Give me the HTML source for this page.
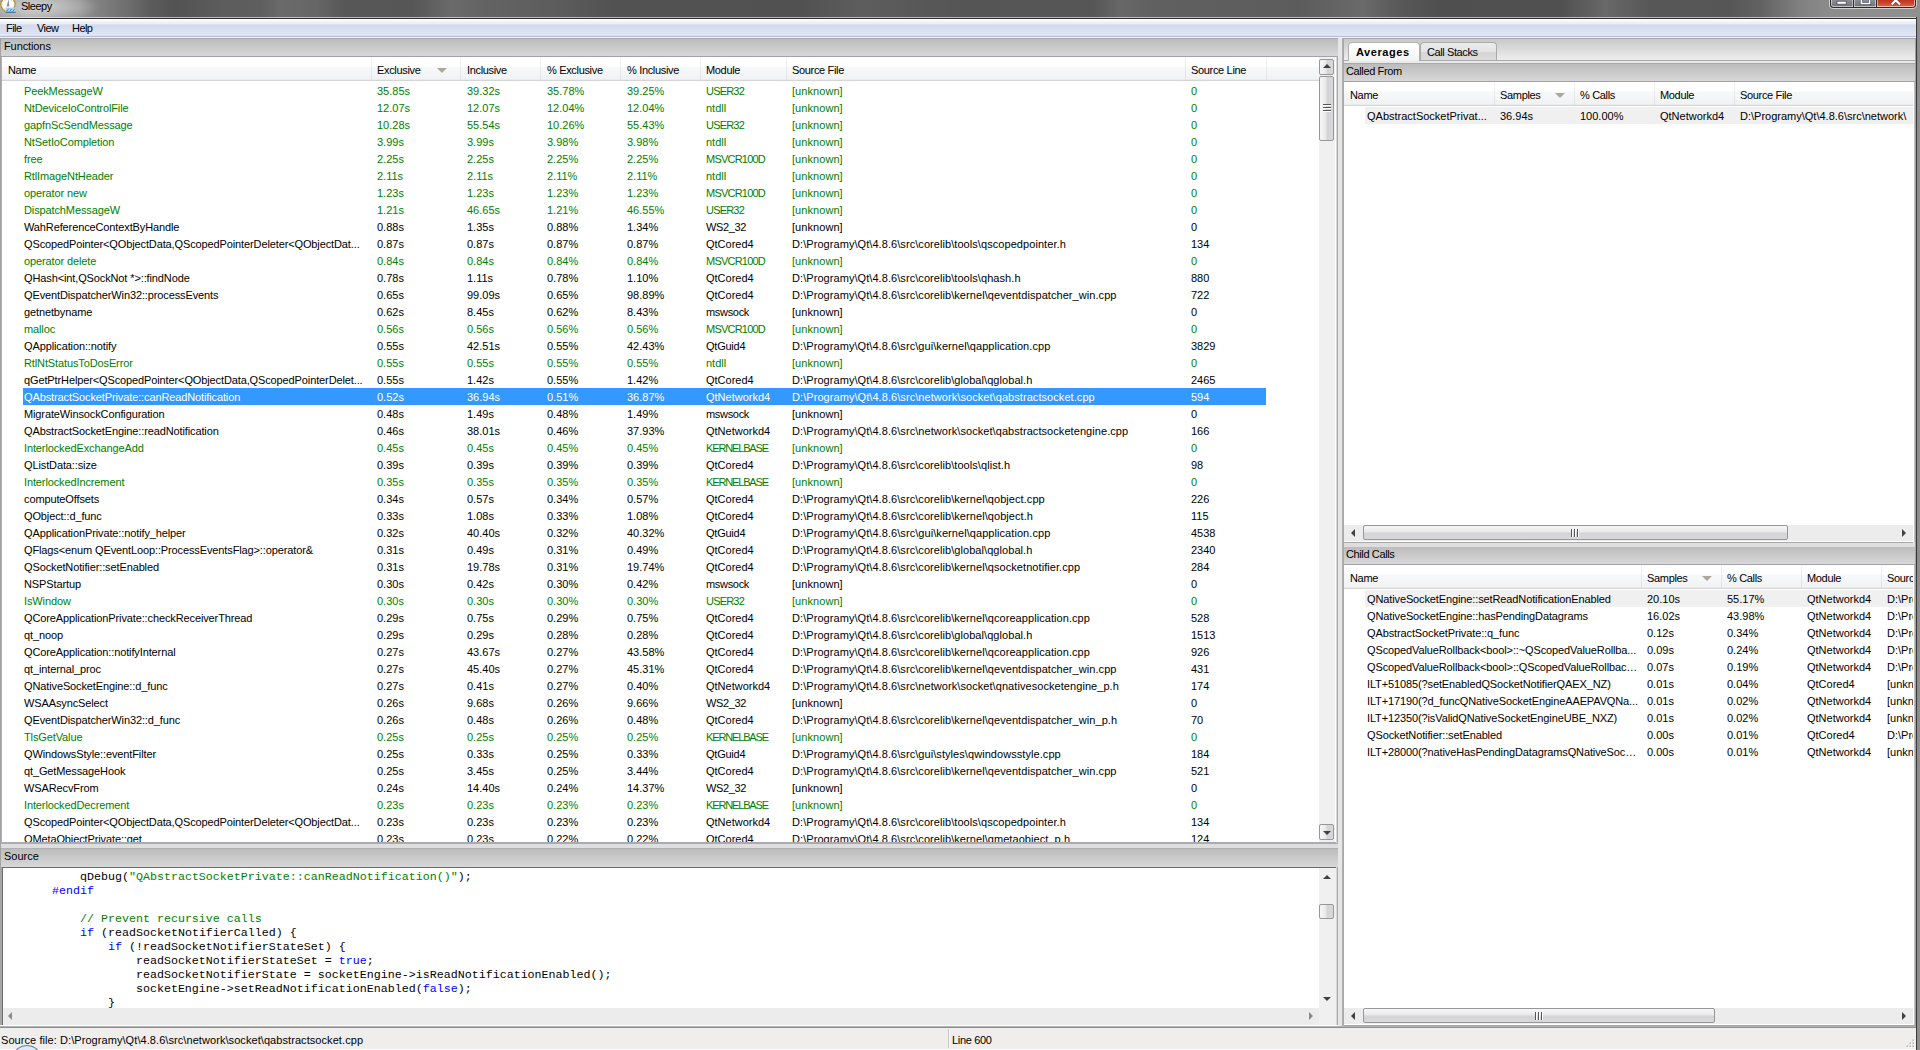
<!DOCTYPE html>
<html><head><meta charset="utf-8"><title>Sleepy</title>
<style>
html,body{margin:0;padding:0}
body{width:1920px;height:1050px;position:relative;overflow:hidden;background:#f0f0f0;font:11px/17px "Liberation Sans",sans-serif;color:#000}
div,i,b,span,svg{position:absolute;display:block;font-style:normal;font-weight:normal;white-space:pre}
/* ---------- window frame / title */
#title{left:0;top:0;width:1920px;height:18px;background:linear-gradient(90deg,#9a9a9a 0px,#a4a4a4 30px,#939393 80px,#808080 100px,#6c6c6c 130px,#5c5c5c 150px,#525252 175px,#5c5c5c 220px,#5e5e5e 260px,#6a6a6a 280px,#666 317px,#575757 345px,#565656 413px,#6a6a6a 451px,#646464 480px,#5c5c5c 557px,#525252 614px,#515151 800px,#5d5d5d 860px,#555 960px,#565656 1094px,#686868 1120px,#606060 1152px,#5c5c5c 1300px,#6a6a6a 1363px,#585858 1400px,#4f4f4f 1440px,#505050 1560px,#686868 1605px,#575757 1650px,#565656 1730px,#626262 1760px,#808080 1800px,#8c8c8c 1830px,#909090 1920px)}
#tglow{left:-25px;top:-9px;width:125px;height:32px;background:radial-gradient(ellipse at center,rgba(255,255,255,.5) 0,rgba(255,255,255,.25) 40%,rgba(255,255,255,0) 70%)}
#tglowc{left:0;top:0;width:140px;height:17px;overflow:hidden}
#ttext{left:21px;top:0;font-size:11px;line-height:13px;color:#000;letter-spacing:-.5px}
#tline{left:0;top:17px;width:1917px;height:2px;background:linear-gradient(180deg,rgba(255,255,255,.58) 0,rgba(255,255,255,.58) 50%,#303030 50%,#303030 100%)}
#rframe{left:1916px;top:17px;width:4px;height:1033px;background:linear-gradient(90deg,#3a3a3a 0,#3a3a3a 25%,#8a8a8a 25%,#909090 100%)}
/* ---------- menu */
#menu{left:0;top:19px;width:1916px;height:18px;background:linear-gradient(180deg,#fff 0,#fff 1px,#fafbfd 1px,#fafbfd 2px,#f2f4fb 2px,#e9edf7 5px,#dde2f1 5px,#dde2f1 6px,#d3d9ec 6px,#e1e6f5 17px,#b5bdd6 17px,#b5bdd6 18px)}
#menu b{top:1px;line-height:16px;letter-spacing:-.55px}
#menu2{left:0;top:37px;width:1916px;height:1px;background:#f2f2f0}
/* ---------- pane headers */
.ph{height:19px;background:linear-gradient(180deg,#a8a8a8 0,#a8a8a8 1px,#bcbcbc 1px,#d8d8d8 18px,#a2a2a9 18px,#a2a2a9 19px);line-height:17px;text-indent:3px}
/* ---------- list views */
.lv{background:#fff;overflow:hidden}
.hd{left:0;top:0;height:24px;background:linear-gradient(180deg,#fff 0,#fff 9px,#f7f8fa 10px,#f1f2f4 22px,#e3e4e6 23px,#d5d5d5 23px,#d5d5d5 24px)}
.hd b{top:5px;line-height:17px;letter-spacing:-.33px}
.hd i{top:0;width:1px;height:23px;background:linear-gradient(180deg,#f2f2f2 0,#dfe0e2 100%)}
.hd u{position:absolute;display:block;top:11px;width:0;height:0;border-left:5px solid transparent;border-right:5px solid transparent;border-top:5px solid #aca899}
.r{left:0;width:100%;height:17px}
.r b{top:1px;line-height:17px}
.g b{color:#008000}
.s b{color:#fff}
.sel{left:21px;top:0;width:1243px;height:17px;background:#3399ff}
.hot{left:21px;top:0;width:700px;height:17px;background:#f0f0f0}
#flist{left:2px;top:57px;width:1317px;height:785px;overflow:hidden}
.c0{left:22px;width:345px;overflow:hidden;text-overflow:ellipsis;letter-spacing:-.12px}.c1{left:375px}.c2{left:465px}.c3{left:545px}.c4{left:625px}.c5{left:704px}.c6{left:790px;letter-spacing:.065px}.c7{left:1189px}
#clist{left:1344px;top:565px;width:569px;height:443px;overflow:hidden}
.d0{left:23px;width:272px;overflow:hidden;text-overflow:ellipsis;letter-spacing:-.12px}.d1{left:303px}.d2{left:383px}.d3{left:463px}.d4{left:543px}
/* ---------- scrollbars */
.sb{background:#f0f0f0}
.btn{border:1px solid #979797;border-radius:2px;background:linear-gradient(90deg,#f6f6f6 0,#e9e9eb 45%,#d4d4d7 55%,#d9d9dc 100%);box-sizing:border-box}
.btnh{border:1px solid #979797;border-radius:2px;background:linear-gradient(180deg,#f6f6f6 0,#e9e9eb 45%,#d4d4d7 55%,#d9d9dc 100%);box-sizing:border-box}
.au{width:0;height:0;border-left:4px solid transparent;border-right:4px solid transparent;border-bottom:4px solid #404040}
.ad{width:0;height:0;border-left:4px solid transparent;border-right:4px solid transparent;border-top:4px solid #404040}
.al{width:0;height:0;border-top:4px solid transparent;border-bottom:4px solid transparent;border-right:4px solid #404040}
.ar{width:0;height:0;border-top:4px solid transparent;border-bottom:4px solid transparent;border-left:4px solid #404040}
/* ---------- source */
#src{left:3px;top:868px;width:1316px;height:140px;background:#fff;overflow:hidden;font:11.67px/14px "Liberation Mono",monospace}
#src b{left:-7px;height:14px;line-height:14px;font-weight:bold}
#src .k{color:#0000ff;position:static;display:inline}
#src .q{color:#008000;position:static;display:inline}
#src span{position:static;display:inline}

.k1{letter-spacing:-1.14px}.k2{letter-spacing:-.78px}.k3{letter-spacing:-.8px}.k4{letter-spacing:-.37px}.k5{letter-spacing:-.24px}.k6{letter-spacing:-.31px}

</style></head>
<body>
<div id="title"></div><div id="tglowc"><div id="tglow"></div></div>
<svg id="ticon" style="left:0;top:0" width="18" height="14" viewBox="0 0 18 14"><circle cx="8" cy="4.3" r="7.2" fill="#fdfdfb" stroke="#b59b2c" stroke-width="1.4"/><g fill="#c4c4c4"><rect x="2.2" y="1" width="1" height="1"/><rect x="13" y="1" width="1" height="1"/><rect x="1.5" y="4" width="1" height="1"/><rect x="13.6" y="4" width="1" height="1"/><rect x="2.3" y="6.6" width="1" height="1"/><rect x="12.8" y="6.4" width="1" height="1"/><rect x="3.6" y="8.4" width="1" height="1"/><rect x="4.6" y="-.4" width="1" height="1"/><rect x="10.8" y="-.4" width="1" height="1"/></g><path d="M8.6 -1L9.4 6.6L6.6 6.6Z" fill="#909090"/><rect x="5.5" y="7.6" width="10.2" height="4.4" fill="#a9d1f3"/><rect x="5.5" y="11.7" width="10.2" height="1.1" fill="#3b6690"/><path d="M6.6 11.4l2.2-2.8M9.8 11.4l2-2.6M12.8 11.4l2-2.6" stroke="#4f86be" stroke-width="1"/></svg>
<div id="ttext">Sleepy</div>
<div id="tline"></div>
<svg style="left:1829px;top:0" width="89" height="10" viewBox="0 0 89 10"><defs><linearGradient id="cg" x1="0" y1="0" x2="0" y2="1"><stop offset="0" stop-color="#8d8d93"/><stop offset="1" stop-color="#6c6c74"/></linearGradient><linearGradient id="cr" x1="0" y1="0" x2="0" y2="1"><stop offset="0" stop-color="#bf3520"/><stop offset=".5" stop-color="#cf4a30"/><stop offset="1" stop-color="#e37a58"/></linearGradient></defs>
<path d="M1 0V5Q1 8 4 8H47.5V0Z" fill="url(#cg)"/><path d="M47.5 0V8H84Q87 8 87 5V0Z" fill="url(#cr)"/>
<path d="M.5 0V5Q.5 8.5 4 8.5H84Q87.5 8.5 87.5 5V0" fill="none" stroke="#dadada" stroke-width="1" opacity=".85"/><path d="M1.5 0V5Q1.5 7.5 4.5 7.5H83.5Q86.5 7.5 86.5 5V0" fill="none" stroke="#2a2a2a" stroke-width="1"/><path d="M2.5 0V4.7Q2.5 6.5 4.8 6.5H83.2Q85.5 6.5 85.5 4.7V0" fill="none" stroke="#fff" stroke-width="1" opacity=".55"/>
<path d="M24.5 0V7M47.5 0V7" stroke="#2e2e2e" stroke-width="1"/><path d="M25.5 0V6.5M23.5 0V6.5M46.5 0V6.5M48.5 0V6.5" stroke="#fff" stroke-width="1" opacity=".45"/>
<rect x="8" y="1.2" width="9.2" height="3" fill="#fff" stroke="#4b4b5c" stroke-width=".8"/><path d="M32.4 0V3.5H40.6V0" fill="none" stroke="#4b4b5c" stroke-width="3"/><path d="M32.4 0V3.5H40.6V0" fill="none" stroke="#fff" stroke-width="1.6"/><path d="M62.6 4.6L66.8 .2L71 4.6" stroke="#6a3a34" stroke-width="3.6" fill="none"/><path d="M62.6 4.6L66.8 .2L71 4.6" stroke="#fff" stroke-width="2.2" fill="none"/></svg>
<div id="rframe"></div>
<div id="menu"><b style="left:6px">File</b><b style="left:37px">View</b><b style="left:72px">Help</b></div><div id="menu2"></div>
<!-- left pane -->
<div style="left:0;top:38px;width:2px;height:989px;background:linear-gradient(90deg,#a2a2a2 0,#a2a2a2 50%,#b0b0b0 50%)"></div>
<div class="ph" style="left:1px;top:38px;width:1337px;letter-spacing:-.1px">Functions</div>
<div class="lv" style="left:2px;top:57px;width:1334px;height:785px">
<div class="hd" style="width:1317px"><b style="left:6px">Name</b><i style="left:369px"></i><b style="left:375px">Exclusive</b><u style="left:435px"></u><i style="left:458px"></i><b style="left:465px">Inclusive</b><i style="left:538px"></i><b style="left:545px">% Exclusive</b><i style="left:618px"></i><b style="left:625px">% Inclusive</b><i style="left:698px"></i><b style="left:704px">Module</b><i style="left:784px"></i><b style="left:790px">Source File</b><i style="left:1183px"></i><b style="left:1189px">Source Line</b><i style="left:1264px"></i></div>
<div class="sb" style="left:1317px;top:0;width:16px;height:785px"></div>
<div class="btn" style="left:1317px;top:2px;width:15px;height:16px"><i class="au" style="left:2.5px;top:4px"></i></div>
<div class="btn" style="left:1317px;top:19px;width:15px;height:65px"><i style="left:3px;top:27px;width:8px;height:1px;background:#555;box-shadow:0 3px 0 #555,0 6px 0 #555,0 1px 0 #fff,0 4px 0 #fff,0 7px 0 #fff"></i></div>
<div class="btn" style="left:1317px;top:767px;width:15px;height:16px"><i class="ad" style="left:2.5px;top:6px"></i></div>
</div>
<div style="left:2px;top:842px;width:1336px;height:2px;background:#aaaab0"></div>
<div style="left:1336px;top:57px;width:2px;height:786px;background:linear-gradient(90deg,#d9d9d9 0,#d9d9d9 50%,#a8a8a8 50%)"></div>
<div id="flist">
<div class="r g" style="top:25px"><b class="c0">PeekMessageW</b><b class="c1">35.85s</b><b class="c2">39.32s</b><b class="c3">35.78%</b><b class="c4">39.25%</b><b class="c5 k3">USER32</b><b class="c6">[unknown]</b><b class="c7">0</b></div>
<div class="r g" style="top:42px"><b class="c0">NtDeviceIoControlFile</b><b class="c1">12.07s</b><b class="c2">12.07s</b><b class="c3">12.04%</b><b class="c4">12.04%</b><b class="c5">ntdll</b><b class="c6">[unknown]</b><b class="c7">0</b></div>
<div class="r g" style="top:59px"><b class="c0">gapfnScSendMessage</b><b class="c1">10.28s</b><b class="c2">55.54s</b><b class="c3">10.26%</b><b class="c4">55.43%</b><b class="c5 k3">USER32</b><b class="c6">[unknown]</b><b class="c7">0</b></div>
<div class="r g" style="top:76px"><b class="c0">NtSetIoCompletion</b><b class="c1">3.99s</b><b class="c2">3.99s</b><b class="c3">3.98%</b><b class="c4">3.98%</b><b class="c5">ntdll</b><b class="c6">[unknown]</b><b class="c7">0</b></div>
<div class="r g" style="top:93px"><b class="c0">free</b><b class="c1">2.25s</b><b class="c2">2.25s</b><b class="c3">2.25%</b><b class="c4">2.25%</b><b class="c5 k2">MSVCR100D</b><b class="c6">[unknown]</b><b class="c7">0</b></div>
<div class="r g" style="top:110px"><b class="c0">RtlImageNtHeader</b><b class="c1">2.11s</b><b class="c2">2.11s</b><b class="c3">2.11%</b><b class="c4">2.11%</b><b class="c5">ntdll</b><b class="c6">[unknown]</b><b class="c7">0</b></div>
<div class="r g" style="top:127px"><b class="c0">operator new</b><b class="c1">1.23s</b><b class="c2">1.23s</b><b class="c3">1.23%</b><b class="c4">1.23%</b><b class="c5 k2">MSVCR100D</b><b class="c6">[unknown]</b><b class="c7">0</b></div>
<div class="r g" style="top:144px"><b class="c0">DispatchMessageW</b><b class="c1">1.21s</b><b class="c2">46.65s</b><b class="c3">1.21%</b><b class="c4">46.55%</b><b class="c5 k3">USER32</b><b class="c6">[unknown]</b><b class="c7">0</b></div>
<div class="r " style="top:161px"><b class="c0">WahReferenceContextByHandle</b><b class="c1">0.88s</b><b class="c2">1.35s</b><b class="c3">0.88%</b><b class="c4">1.34%</b><b class="c5 k4">WS2_32</b><b class="c6">[unknown]</b><b class="c7">0</b></div>
<div class="r " style="top:178px"><b class="c0">QScopedPointer&lt;QObjectData,QScopedPointerDeleter&lt;QObjectDat...</b><b class="c1">0.87s</b><b class="c2">0.87s</b><b class="c3">0.87%</b><b class="c4">0.87%</b><b class="c5">QtCored4</b><b class="c6">D:\Programy\Qt\4.8.6\src\corelib\tools\qscopedpointer.h</b><b class="c7">134</b></div>
<div class="r g" style="top:195px"><b class="c0">operator delete</b><b class="c1">0.84s</b><b class="c2">0.84s</b><b class="c3">0.84%</b><b class="c4">0.84%</b><b class="c5 k2">MSVCR100D</b><b class="c6">[unknown]</b><b class="c7">0</b></div>
<div class="r " style="top:212px"><b class="c0">QHash&lt;int,QSockNot *&gt;::findNode</b><b class="c1">0.78s</b><b class="c2">1.11s</b><b class="c3">0.78%</b><b class="c4">1.10%</b><b class="c5">QtCored4</b><b class="c6">D:\Programy\Qt\4.8.6\src\corelib\tools\qhash.h</b><b class="c7">880</b></div>
<div class="r " style="top:229px"><b class="c0">QEventDispatcherWin32::processEvents</b><b class="c1">0.65s</b><b class="c2">99.09s</b><b class="c3">0.65%</b><b class="c4">98.89%</b><b class="c5">QtCored4</b><b class="c6">D:\Programy\Qt\4.8.6\src\corelib\kernel\qeventdispatcher_win.cpp</b><b class="c7">722</b></div>
<div class="r " style="top:246px"><b class="c0">getnetbyname</b><b class="c1">0.62s</b><b class="c2">8.45s</b><b class="c3">0.62%</b><b class="c4">8.43%</b><b class="c5 k6">mswsock</b><b class="c6">[unknown]</b><b class="c7">0</b></div>
<div class="r g" style="top:263px"><b class="c0">malloc</b><b class="c1">0.56s</b><b class="c2">0.56s</b><b class="c3">0.56%</b><b class="c4">0.56%</b><b class="c5 k2">MSVCR100D</b><b class="c6">[unknown]</b><b class="c7">0</b></div>
<div class="r " style="top:280px"><b class="c0">QApplication::notify</b><b class="c1">0.55s</b><b class="c2">42.51s</b><b class="c3">0.55%</b><b class="c4">42.43%</b><b class="c5 k5">QtGuid4</b><b class="c6">D:\Programy\Qt\4.8.6\src\gui\kernel\qapplication.cpp</b><b class="c7">3829</b></div>
<div class="r g" style="top:297px"><b class="c0">RtlNtStatusToDosError</b><b class="c1">0.55s</b><b class="c2">0.55s</b><b class="c3">0.55%</b><b class="c4">0.55%</b><b class="c5">ntdll</b><b class="c6">[unknown]</b><b class="c7">0</b></div>
<div class="r " style="top:314px"><b class="c0">qGetPtrHelper&lt;QScopedPointer&lt;QObjectData,QScopedPointerDelet...</b><b class="c1">0.55s</b><b class="c2">1.42s</b><b class="c3">0.55%</b><b class="c4">1.42%</b><b class="c5">QtCored4</b><b class="c6">D:\Programy\Qt\4.8.6\src\corelib\global\qglobal.h</b><b class="c7">2465</b></div>
<div class="r s" style="top:331px"><i class="sel"></i><b class="c0">QAbstractSocketPrivate::canReadNotification</b><b class="c1">0.52s</b><b class="c2">36.94s</b><b class="c3">0.51%</b><b class="c4">36.87%</b><b class="c5">QtNetworkd4</b><b class="c6">D:\Programy\Qt\4.8.6\src\network\socket\qabstractsocket.cpp</b><b class="c7">594</b></div>
<div class="r " style="top:348px"><b class="c0">MigrateWinsockConfiguration</b><b class="c1">0.48s</b><b class="c2">1.49s</b><b class="c3">0.48%</b><b class="c4">1.49%</b><b class="c5 k6">mswsock</b><b class="c6">[unknown]</b><b class="c7">0</b></div>
<div class="r " style="top:365px"><b class="c0">QAbstractSocketEngine::readNotification</b><b class="c1">0.46s</b><b class="c2">38.01s</b><b class="c3">0.46%</b><b class="c4">37.93%</b><b class="c5">QtNetworkd4</b><b class="c6">D:\Programy\Qt\4.8.6\src\network\socket\qabstractsocketengine.cpp</b><b class="c7">166</b></div>
<div class="r g" style="top:382px"><b class="c0">InterlockedExchangeAdd</b><b class="c1">0.45s</b><b class="c2">0.45s</b><b class="c3">0.45%</b><b class="c4">0.45%</b><b class="c5 k1">KERNELBASE</b><b class="c6">[unknown]</b><b class="c7">0</b></div>
<div class="r " style="top:399px"><b class="c0">QListData::size</b><b class="c1">0.39s</b><b class="c2">0.39s</b><b class="c3">0.39%</b><b class="c4">0.39%</b><b class="c5">QtCored4</b><b class="c6">D:\Programy\Qt\4.8.6\src\corelib\tools\qlist.h</b><b class="c7">98</b></div>
<div class="r g" style="top:416px"><b class="c0">InterlockedIncrement</b><b class="c1">0.35s</b><b class="c2">0.35s</b><b class="c3">0.35%</b><b class="c4">0.35%</b><b class="c5 k1">KERNELBASE</b><b class="c6">[unknown]</b><b class="c7">0</b></div>
<div class="r " style="top:433px"><b class="c0">computeOffsets</b><b class="c1">0.34s</b><b class="c2">0.57s</b><b class="c3">0.34%</b><b class="c4">0.57%</b><b class="c5">QtCored4</b><b class="c6">D:\Programy\Qt\4.8.6\src\corelib\kernel\qobject.cpp</b><b class="c7">226</b></div>
<div class="r " style="top:450px"><b class="c0">QObject::d_func</b><b class="c1">0.33s</b><b class="c2">1.08s</b><b class="c3">0.33%</b><b class="c4">1.08%</b><b class="c5">QtCored4</b><b class="c6">D:\Programy\Qt\4.8.6\src\corelib\kernel\qobject.h</b><b class="c7">115</b></div>
<div class="r " style="top:467px"><b class="c0">QApplicationPrivate::notify_helper</b><b class="c1">0.32s</b><b class="c2">40.40s</b><b class="c3">0.32%</b><b class="c4">40.32%</b><b class="c5 k5">QtGuid4</b><b class="c6">D:\Programy\Qt\4.8.6\src\gui\kernel\qapplication.cpp</b><b class="c7">4538</b></div>
<div class="r " style="top:484px"><b class="c0">QFlags&lt;enum QEventLoop::ProcessEventsFlag&gt;::operator&amp;</b><b class="c1">0.31s</b><b class="c2">0.49s</b><b class="c3">0.31%</b><b class="c4">0.49%</b><b class="c5">QtCored4</b><b class="c6">D:\Programy\Qt\4.8.6\src\corelib\global\qglobal.h</b><b class="c7">2340</b></div>
<div class="r " style="top:501px"><b class="c0">QSocketNotifier::setEnabled</b><b class="c1">0.31s</b><b class="c2">19.78s</b><b class="c3">0.31%</b><b class="c4">19.74%</b><b class="c5">QtCored4</b><b class="c6">D:\Programy\Qt\4.8.6\src\corelib\kernel\qsocketnotifier.cpp</b><b class="c7">284</b></div>
<div class="r " style="top:518px"><b class="c0">NSPStartup</b><b class="c1">0.30s</b><b class="c2">0.42s</b><b class="c3">0.30%</b><b class="c4">0.42%</b><b class="c5 k6">mswsock</b><b class="c6">[unknown]</b><b class="c7">0</b></div>
<div class="r g" style="top:535px"><b class="c0">IsWindow</b><b class="c1">0.30s</b><b class="c2">0.30s</b><b class="c3">0.30%</b><b class="c4">0.30%</b><b class="c5 k3">USER32</b><b class="c6">[unknown]</b><b class="c7">0</b></div>
<div class="r " style="top:552px"><b class="c0">QCoreApplicationPrivate::checkReceiverThread</b><b class="c1">0.29s</b><b class="c2">0.75s</b><b class="c3">0.29%</b><b class="c4">0.75%</b><b class="c5">QtCored4</b><b class="c6">D:\Programy\Qt\4.8.6\src\corelib\kernel\qcoreapplication.cpp</b><b class="c7">528</b></div>
<div class="r " style="top:569px"><b class="c0">qt_noop</b><b class="c1">0.29s</b><b class="c2">0.29s</b><b class="c3">0.28%</b><b class="c4">0.28%</b><b class="c5">QtCored4</b><b class="c6">D:\Programy\Qt\4.8.6\src\corelib\global\qglobal.h</b><b class="c7">1513</b></div>
<div class="r " style="top:586px"><b class="c0">QCoreApplication::notifyInternal</b><b class="c1">0.27s</b><b class="c2">43.67s</b><b class="c3">0.27%</b><b class="c4">43.58%</b><b class="c5">QtCored4</b><b class="c6">D:\Programy\Qt\4.8.6\src\corelib\kernel\qcoreapplication.cpp</b><b class="c7">926</b></div>
<div class="r " style="top:603px"><b class="c0">qt_internal_proc</b><b class="c1">0.27s</b><b class="c2">45.40s</b><b class="c3">0.27%</b><b class="c4">45.31%</b><b class="c5">QtCored4</b><b class="c6">D:\Programy\Qt\4.8.6\src\corelib\kernel\qeventdispatcher_win.cpp</b><b class="c7">431</b></div>
<div class="r " style="top:620px"><b class="c0">QNativeSocketEngine::d_func</b><b class="c1">0.27s</b><b class="c2">0.41s</b><b class="c3">0.27%</b><b class="c4">0.40%</b><b class="c5">QtNetworkd4</b><b class="c6">D:\Programy\Qt\4.8.6\src\network\socket\qnativesocketengine_p.h</b><b class="c7">174</b></div>
<div class="r " style="top:637px"><b class="c0">WSAAsyncSelect</b><b class="c1">0.26s</b><b class="c2">9.68s</b><b class="c3">0.26%</b><b class="c4">9.66%</b><b class="c5 k4">WS2_32</b><b class="c6">[unknown]</b><b class="c7">0</b></div>
<div class="r " style="top:654px"><b class="c0">QEventDispatcherWin32::d_func</b><b class="c1">0.26s</b><b class="c2">0.48s</b><b class="c3">0.26%</b><b class="c4">0.48%</b><b class="c5">QtCored4</b><b class="c6">D:\Programy\Qt\4.8.6\src\corelib\kernel\qeventdispatcher_win_p.h</b><b class="c7">70</b></div>
<div class="r g" style="top:671px"><b class="c0">TlsGetValue</b><b class="c1">0.25s</b><b class="c2">0.25s</b><b class="c3">0.25%</b><b class="c4">0.25%</b><b class="c5 k1">KERNELBASE</b><b class="c6">[unknown]</b><b class="c7">0</b></div>
<div class="r " style="top:688px"><b class="c0">QWindowsStyle::eventFilter</b><b class="c1">0.25s</b><b class="c2">0.33s</b><b class="c3">0.25%</b><b class="c4">0.33%</b><b class="c5 k5">QtGuid4</b><b class="c6">D:\Programy\Qt\4.8.6\src\gui\styles\qwindowsstyle.cpp</b><b class="c7">184</b></div>
<div class="r " style="top:705px"><b class="c0">qt_GetMessageHook</b><b class="c1">0.25s</b><b class="c2">3.45s</b><b class="c3">0.25%</b><b class="c4">3.44%</b><b class="c5">QtCored4</b><b class="c6">D:\Programy\Qt\4.8.6\src\corelib\kernel\qeventdispatcher_win.cpp</b><b class="c7">521</b></div>
<div class="r " style="top:722px"><b class="c0">WSARecvFrom</b><b class="c1">0.24s</b><b class="c2">14.40s</b><b class="c3">0.24%</b><b class="c4">14.37%</b><b class="c5 k4">WS2_32</b><b class="c6">[unknown]</b><b class="c7">0</b></div>
<div class="r g" style="top:739px"><b class="c0">InterlockedDecrement</b><b class="c1">0.23s</b><b class="c2">0.23s</b><b class="c3">0.23%</b><b class="c4">0.23%</b><b class="c5 k1">KERNELBASE</b><b class="c6">[unknown]</b><b class="c7">0</b></div>
<div class="r " style="top:756px"><b class="c0">QScopedPointer&lt;QObjectData,QScopedPointerDeleter&lt;QObjectDat...</b><b class="c1">0.23s</b><b class="c2">0.23s</b><b class="c3">0.23%</b><b class="c4">0.23%</b><b class="c5">QtNetworkd4</b><b class="c6">D:\Programy\Qt\4.8.6\src\corelib\tools\qscopedpointer.h</b><b class="c7">134</b></div>
<div class="r " style="top:773px"><b class="c0">QMetaObjectPrivate::get</b><b class="c1">0.23s</b><b class="c2">0.23s</b><b class="c3">0.22%</b><b class="c4">0.22%</b><b class="c5">QtCored4</b><b class="c6">D:\Programy\Qt\4.8.6\src\corelib\kernel\qmetaobject_p.h</b><b class="c7">124</b></div>
</div>
<!-- splitter gap + source pane -->
<div style="left:1px;top:844px;width:1337px;height:4px;background:#dedede"></div>
<div class="ph" style="left:1px;top:848px;width:1337px;background:linear-gradient(180deg,#b0b0b0 0,#b0b0b0 1px,#bcbcbc 1px,#d6d6d6 18px,#d8d8d8 18px,#d8d8d8 19px)">Source</div>
<div style="left:0;top:867px;width:3px;height:159px;background:linear-gradient(90deg,#a6a6a6 0,#a6a6a6 66%,#6e6e6e 66%)"></div>
<div style="left:2px;top:867px;width:1334px;height:1px;background:#6a6a6a"></div>
<div id="src">
<b style="top:2px">            <span>qDebug(</span><span class="q">"QAbstractSocketPrivate::canReadNotification()"</span><span>);</span></b>
<b style="top:16px">        <span class="k">#endif</span></b>
<b style="top:44px">            <span class="q">// Prevent recursive calls</span></b>
<b style="top:58px">            <span class="k">if</span><span> (readSocketNotifierCalled) {</span></b>
<b style="top:72px">                <span class="k">if</span><span> (!readSocketNotifierStateSet) {</span></b>
<b style="top:86px">                    <span>readSocketNotifierStateSet = </span><span class="k">true</span><span>;</span></b>
<b style="top:100px">                    <span>readSocketNotifierState = socketEngine-&gt;isReadNotificationEnabled();</span></b>
<b style="top:114px">                    <span>socketEngine-&gt;setReadNotificationEnabled(</span><span class="k">false</span><span>);</span></b>
<b style="top:128px">                <span>}</span></b>
</div>
<div class="sb" style="left:1319px;top:868px;width:17px;height:140px"><i class="au" style="left:4px;top:7px"></i><div class="btn" style="left:0;top:36px;width:15px;height:15px"></div><i class="ad" style="left:4px;top:129px"></i></div>
<div class="sb" style="left:3px;top:1008px;width:1333px;height:17px;background:#ececec"><i class="al" style="left:5px;top:4px;border-right-color:#8a8a8a"></i><i class="ar" style="left:1306px;top:4px;border-left-color:#8a8a8a"></i><i style="left:1316px;top:0;width:17px;height:17px;background:#f0f0f0"></i></div>

<div style="left:1336px;top:867px;width:2px;height:160px;background:linear-gradient(90deg,#d9d9d9 0,#d9d9d9 50%,#a8a8a8 50%)"></div>
<!-- vertical splitter -->
<div style="left:1338px;top:38px;width:6px;height:989px;background:linear-gradient(90deg,#e6e6e6 0,#e6e6e6 66%,#b4b4b4 66%,#a4a4a4 100%)"></div>
<!-- right pane -->
<div style="left:1344px;top:38px;width:572px;height:23px;background:linear-gradient(180deg,#a8a8a8 0,#a8a8a8 1px,#c8c8c8 1px,#eee 22px,#a8a8a8 22px,#a8a8a8 23px)"></div>
<div style="left:1420px;top:42px;width:77px;height:18px;box-sizing:border-box;border:1px solid #aaa;border-bottom:none;border-radius:4px 4px 0 0;background:linear-gradient(180deg,#ececec 0,#e4e4e4 50%,#d6d6d6 55%,#dadada 100%);line-height:18px;text-indent:6px;letter-spacing:-.4px">Call Stacks</div>
<div style="left:1348px;top:42px;width:72px;height:20px;box-sizing:border-box;border:1px solid #b0b0b0;border-bottom:none;border-radius:4px 4px 0 0;background:linear-gradient(180deg,#fff 0,#fbfbfb 50%,#f0f0f0 100%);line-height:19px;text-indent:7px;font-weight:bold;letter-spacing:.56px">Averages</div>
<div style="left:1344px;top:61px;width:572px;height:2px;background:#e9e9e9"></div>
<div class="ph" style="left:1344px;top:63px;width:571px;text-indent:2px;letter-spacing:-.38px">Called From</div>
<div class="lv" style="left:1344px;top:82px;width:569px;height:460px">
<div class="hd" style="width:569px"><b style="left:6px">Name</b><i style="left:150px"></i><b style="left:156px">Samples</b><u style="left:211px"></u><i style="left:230px"></i><b style="left:236px">% Calls</b><i style="left:310px"></i><b style="left:316px">Module</b><i style="left:390px"></i><b style="left:396px">Source File</b></div>
<div class="r" style="top:25px"><i class="hot" style="width:548px"></i><b style="left:23px">QAbstractSocketPrivat...</b><b style="left:156px">36.94s</b><b style="left:236px">100.00%</b><b style="left:316px">QtNetworkd4</b><b style="left:396px">D:\Programy\Qt\4.8.6\src\network\</b></div>
<div class="sb" style="left:0;top:443px;width:569px;height:16px;background:#ececec"><i class="al" style="left:7px;top:4px"></i><div class="btnh" style="left:19px;top:0;width:425px;height:15px"><i style="left:207px;top:3px;width:1px;height:8px;background:#555;box-shadow:3px 0 0 #555,6px 0 0 #555,1px 0 0 #fff,4px 0 0 #fff,7px 0 0 #fff"></i></div><i class="ar" style="left:558px;top:4px"></i></div>
</div>
<div style="left:1344px;top:542px;width:572px;height:1px;background:#a8a8a8"></div>
<div style="left:1344px;top:543px;width:572px;height:3px;background:#dedede"></div>
<div class="ph" style="left:1344px;top:546px;width:571px;text-indent:2px;background:linear-gradient(180deg,#dedede 0,#dedede 1px,#bcbcbc 1px,#d8d8d8 18px,#a2a2a9 18px,#a2a2a9 19px);letter-spacing:-.38px">Child Calls</div>
<div class="lv" style="left:1344px;top:565px;width:569px;height:460px">
<div class="hd" style="width:569px"><b style="left:6px">Name</b><i style="left:297px"></i><b style="left:303px">Samples</b><u style="left:358px"></u><i style="left:377px"></i><b style="left:383px">% Calls</b><i style="left:457px"></i><b style="left:463px">Module</b><i style="left:537px"></i><b style="left:543px">Source File</b></div>
<div class="sb" style="left:0;top:443px;width:569px;height:16px;background:#ececec"><i class="al" style="left:7px;top:4px"></i><div class="btnh" style="left:19px;top:0;width:352px;height:15px"><i style="left:171px;top:3px;width:1px;height:8px;background:#555;box-shadow:3px 0 0 #555,6px 0 0 #555,1px 0 0 #fff,4px 0 0 #fff,7px 0 0 #fff"></i></div><i class="ar" style="left:558px;top:4px"></i></div>
</div>
<div id="clist">
<div class="r" style="top:25px"><i class="hot"></i><b class="d0">QNativeSocketEngine::setReadNotificationEnabled</b><b class="d1">20.10s</b><b class="d2">55.17%</b><b class="d3">QtNetworkd4</b><b class="d4">D:\Programy</b></div>
<div class="r" style="top:42px"><b class="d0">QNativeSocketEngine::hasPendingDatagrams</b><b class="d1">16.02s</b><b class="d2">43.98%</b><b class="d3">QtNetworkd4</b><b class="d4">D:\Programy</b></div>
<div class="r" style="top:59px"><b class="d0">QAbstractSocketPrivate::q_func</b><b class="d1">0.12s</b><b class="d2">0.34%</b><b class="d3">QtNetworkd4</b><b class="d4">D:\Programy</b></div>
<div class="r" style="top:76px"><b class="d0">QScopedValueRollback&lt;bool&gt;::~QScopedValueRollba...</b><b class="d1">0.09s</b><b class="d2">0.24%</b><b class="d3">QtNetworkd4</b><b class="d4">D:\Programy</b></div>
<div class="r" style="top:93px"><b class="d0">QScopedValueRollback&lt;bool&gt;::QScopedValueRollback...</b><b class="d1">0.07s</b><b class="d2">0.19%</b><b class="d3">QtNetworkd4</b><b class="d4">D:\Programy</b></div>
<div class="r" style="top:110px"><b class="d0">ILT+51085(?setEnabledQSocketNotifierQAEX_NZ)</b><b class="d1">0.01s</b><b class="d2">0.04%</b><b class="d3">QtCored4</b><b class="d4">[unknown]</b></div>
<div class="r" style="top:127px"><b class="d0">ILT+17190(?d_funcQNativeSocketEngineAAEPAVQNa...</b><b class="d1">0.01s</b><b class="d2">0.02%</b><b class="d3">QtNetworkd4</b><b class="d4">[unknown]</b></div>
<div class="r" style="top:144px"><b class="d0">ILT+12350(?isValidQNativeSocketEngineUBE_NXZ)</b><b class="d1">0.01s</b><b class="d2">0.02%</b><b class="d3">QtNetworkd4</b><b class="d4">[unknown]</b></div>
<div class="r" style="top:161px"><b class="d0">QSocketNotifier::setEnabled</b><b class="d1">0.00s</b><b class="d2">0.01%</b><b class="d3">QtCored4</b><b class="d4">D:\Programy</b></div>
<div class="r" style="top:178px"><b class="d0">ILT+28000(?nativeHasPendingDatagramsQNativeSock...</b><b class="d1">0.00s</b><b class="d2">0.01%</b><b class="d3">QtNetworkd4</b><b class="d4">[unknown]</b></div>
</div>
<div style="left:1913px;top:82px;width:3px;height:461px;background:linear-gradient(90deg,#fff 0,#fff 50%,#c0c0c0 50%,#c0c0c0 83%,#999 83%)"></div><div style="left:1913px;top:565px;width:3px;height:461px;background:linear-gradient(90deg,#fff 0,#fff 50%,#c0c0c0 50%,#c0c0c0 83%,#999 83%)"></div><div style="left:1915px;top:38px;width:1px;height:989px;background:#a0a0a0"></div>

<div style="left:1344px;top:1025px;width:572px;height:3px;background:#a2a2a2"></div>
<!-- status bar -->
<div style="left:0;top:1025px;width:1338px;height:1px;background:#fff"></div><div style="left:0;top:1026px;width:1916px;height:2px;background:linear-gradient(180deg,#b4b4b4 0,#b4b4b4 50%,#8e8e8e 50%)"></div>
<div style="left:0;top:1028px;width:1916px;height:22px;background:#f0eded"></div>
<div style="left:0;top:1049px;width:1916px;height:1px;background:#fff"></div>
<div style="left:1px;top:1032px;line-height:17px;letter-spacing:.07px">Source file: D:\Programy\Qt\4.8.6\src\network\socket\qabstractsocket.cpp</div>
<div style="left:948px;top:1029px;width:2px;height:19px;background:linear-gradient(90deg,#c8c8c8 0,#c8c8c8 50%,#f8f8f8 50%)"></div>
<div style="left:952px;top:1032px;line-height:17px;letter-spacing:-.33px">Line 600</div>
<div style="left:14px;top:1045px;width:24px;height:18px;border-radius:50%;border:1.5px solid #4a84b8;background:#dfeaf5"></div>
<svg style="left:1906px;top:1039px" width="9" height="9" viewBox="0 0 9 9"><g fill="#fff"><rect x="7" y="1" width="2" height="2"/><rect x="4" y="4" width="2" height="2"/><rect x="7" y="4" width="2" height="2"/><rect x="1" y="7" width="2" height="2"/><rect x="4" y="7" width="2" height="2"/><rect x="7" y="7" width="2" height="2"/></g><g fill="#b4b4b4"><rect x="6.5" y=".5" width="1.6" height="1.6"/><rect x="3.5" y="3.5" width="1.6" height="1.6"/><rect x="6.5" y="3.5" width="1.6" height="1.6"/><rect x=".5" y="6.5" width="1.6" height="1.6"/><rect x="3.5" y="6.5" width="1.6" height="1.6"/><rect x="6.5" y="6.5" width="1.6" height="1.6"/></g></svg>
</body></html>
